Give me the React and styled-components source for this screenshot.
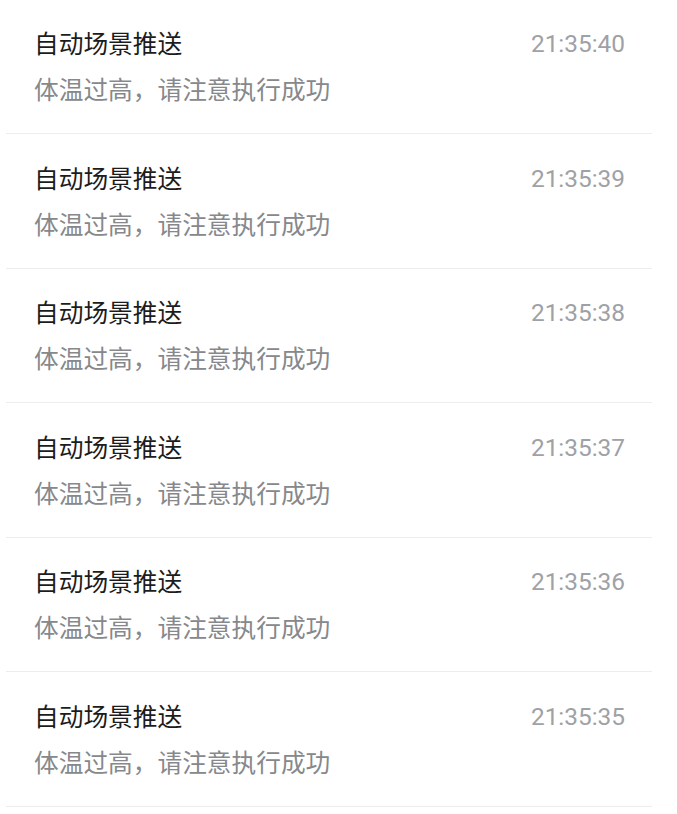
import React from "react";
import styled, { createGlobalStyle } from "styled-components";

const Global = createGlobalStyle`
  html, body { margin: 0; padding: 0; background: #ffffff; }
  body { font-family: "Noto Sans CJK SC", "Noto Sans", sans-serif; }
`;

const Page = styled.div`
  width: 677px;
  background: #ffffff;
  overflow: hidden;
`;

const List = styled.ul`
  list-style: none;
  margin: -0.6px 0 0 6px;
  padding: 0;
  width: 646px;
`;

const Item = styled.li`
  box-sizing: border-box;
  height: 134.6px;
  padding: 24.6px 27px 0 28px;
  border-bottom: 1px solid #ededed;
`;

const Head = styled.div`
  display: flex;
  justify-content: space-between;
  align-items: center;
  height: 36px;
`;

const Title = styled.div`
  font-size: 24.7px;
  line-height: 36px;
  color: #1c1c1c;
  font-weight: 400;
`;

const Time = styled.div`
  margin-top: 4px;
  font-family: Roboto, "Liberation Sans", sans-serif;
  font-size: 24.4px;
  line-height: 36px;
  color: #9ea1a6;
`;

const Desc = styled.div`
  margin-top: 10px;
  font-size: 24.7px;
  line-height: 36px;
  color: #86888b;
`;

const rows = ["21:35:40", "21:35:39", "21:35:38", "21:35:37", "21:35:36", "21:35:35"];

export default function App() {
  return (
    <Page>
      <Global />
      <List>
        {rows.map((t) => (
          <Item key={t}>
            <Head>
              <Title>自动场景推送</Title>
              <Time>{t}</Time>
            </Head>
            <Desc>体温过高，请注意执行成功</Desc>
          </Item>
        ))}
      </List>
    </Page>
  );
}
